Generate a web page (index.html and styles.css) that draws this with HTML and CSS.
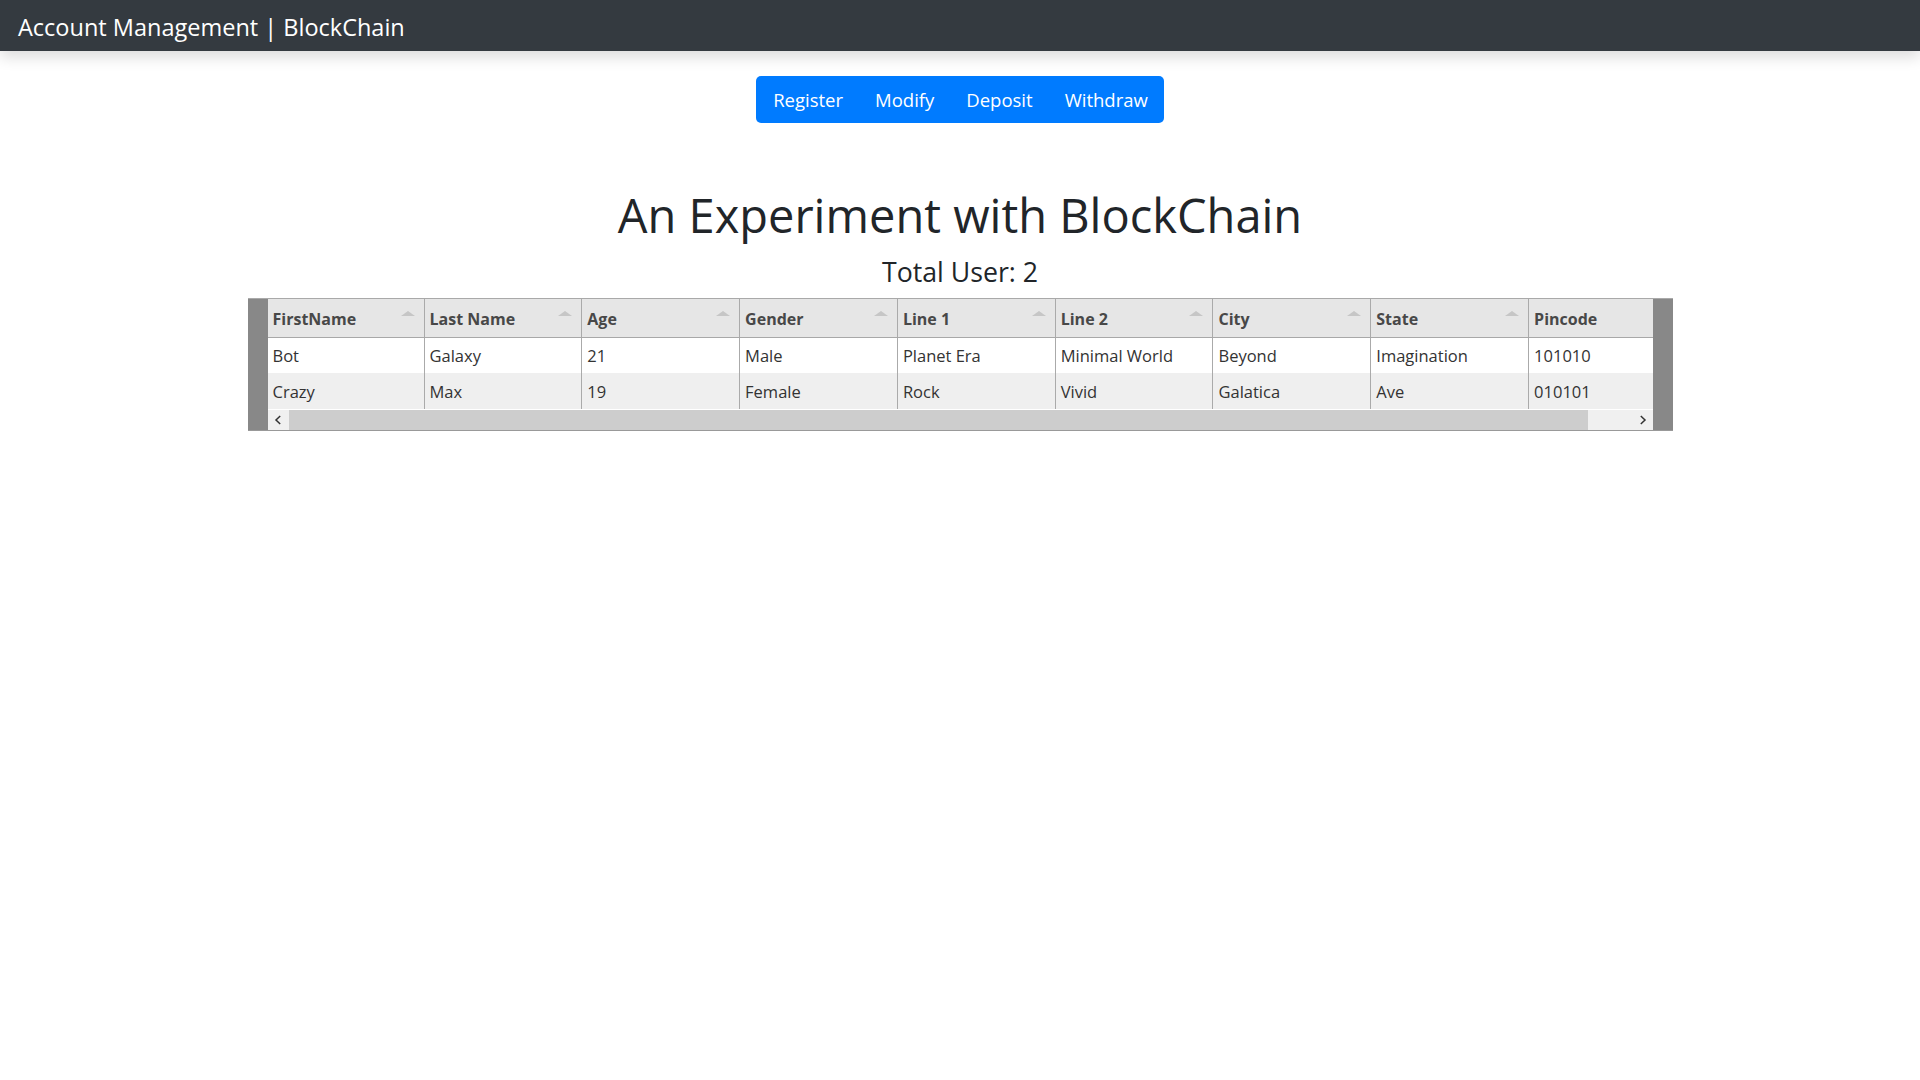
FILE: index.html
```html
<!DOCTYPE html>
<html lang="en">
<head>
<meta charset="utf-8">
<title>Account Management | BlockChain</title>
<link rel="stylesheet" href="styles.css">
</head>
<body>
<nav class="navbar"><span class="brand">Account Management | BlockChain</span></nav>
<main class="content">
  <div class="btn-group">
    <button class="btn">Register</button>
    <button class="btn">Modify</button>
    <button class="btn">Deposit</button>
    <button class="btn">Withdraw</button>
  </div>
  <h1 class="title">An Experiment with BlockChain</h1>
  <h3 class="subtitle">Total User: 2</h3>
  <div class="grid">
    <div class="grid-inner">
      <div class="viewport">
        <div class="row head">
          <div class="cell">FirstName<span class="sort"></span></div>
          <div class="cell">Last Name<span class="sort"></span></div>
          <div class="cell">Age<span class="sort"></span></div>
          <div class="cell">Gender<span class="sort"></span></div>
          <div class="cell">Line 1<span class="sort"></span></div>
          <div class="cell">Line 2<span class="sort"></span></div>
          <div class="cell">City<span class="sort"></span></div>
          <div class="cell">State<span class="sort"></span></div>
          <div class="cell">Pincode<span class="sort"></span></div>
        </div>
        <div class="row odd">
          <div class="cell">Bot</div>
          <div class="cell">Galaxy</div>
          <div class="cell">21</div>
          <div class="cell">Male</div>
          <div class="cell">Planet Era</div>
          <div class="cell">Minimal World</div>
          <div class="cell">Beyond</div>
          <div class="cell">Imagination</div>
          <div class="cell">101010</div>
        </div>
        <div class="row even">
          <div class="cell">Crazy</div>
          <div class="cell">Max</div>
          <div class="cell">19</div>
          <div class="cell">Female</div>
          <div class="cell">Rock</div>
          <div class="cell">Vivid</div>
          <div class="cell">Galatica</div>
          <div class="cell">Ave</div>
          <div class="cell">010101</div>
        </div>
      </div>
      <div class="hscroll">
        <span class="arrow"><svg width="8" height="10" viewBox="0 0 8 10"><path d="M6.2 1 L2 5 L6.2 9" fill="none" stroke="#333" stroke-width="1.5"/></svg></span>
        <div class="track"><div class="thumb"></div></div>
        <span class="arrow"><svg width="8" height="10" viewBox="0 0 8 10"><path d="M1.8 1 L6 5 L1.8 9" fill="none" stroke="#333" stroke-width="1.5"/></svg></span>
      </div>
    </div>
  </div>
</main>
</body>
</html>
```
FILE: styles.css
```css
html, body {
  margin: 0;
  padding: 0;
  background: #fff;
}
body {
  font-family: "Open Sans", "Noto Sans", "DejaVu Sans", sans-serif;
  color: #212529;
}
.navbar {
  height: 51px;
  box-sizing: border-box;
  background: #343a40;
  display: flex;
  align-items: flex-start;
  padding: 16px 0 0 18px;
  box-shadow: 0 6px 14px rgba(0, 0, 0, 0.14);
  position: relative;
  z-index: 1;
}
.brand {
  color: #fff;
  font-size: 23.5px;
  line-height: 23.5px;
}
.content {
  display: flex;
  flex-direction: column;
  align-items: center;
  padding-top: 25px;
}
.btn-group {
  display: flex;
  background: #007bff;
  border-radius: 5px;
  height: 47px;
}
.btn {
  background: transparent;
  border: 0;
  color: #fff;
  font-family: inherit;
  font-size: 18.5px;
  padding: 0 16px;
  height: 47px;
  cursor: pointer;
}
.btn:first-child { padding-left: 17px; }
.title {
  margin: 64px 0 0;
  font-size: 47px;
  font-weight: 400;
  line-height: 56px;
  color: #212529;
}
.subtitle {
  margin: 13px 0 0;
  font-size: 26.7px;
  font-weight: 400;
  line-height: 32px;
  color: #212529;
}
.grid {
  margin-top: 10px;
  width: 1425px;
  box-sizing: border-box;
  border-top: 1px solid #a9a9a9;
  border-bottom: 1px solid #999;
  background: #888;
  padding: 0 20px;
}
.grid-inner {
  background: #fff;
  overflow: hidden;
}
.viewport {
  overflow: hidden;
  width: 1385px;
}
.row {
  display: grid;
  grid-template-columns: 157px repeat(8, 157.8px);
  width: max-content;
}
.cell {
  position: relative;
  box-sizing: border-box;
  border-right: 1px solid #aaa;
  padding: 0 5px;
  font-size: 16.5px;
  white-space: nowrap;
  display: flex;
  align-items: center;
  color: #333;
}
.head {
  height: 38px;
  background: #e6e6e6;
  border-bottom: 1px solid #a8a8a8;
}
.head .cell {
  font-weight: 700;
  font-size: 16px;
  color: #484848;
  padding-top: 1px;
}
.odd { height: 35px; background: #fff; }
.even { height: 36px; background: #efefef; border-bottom: 1px solid #fff; }
.sort {
  position: absolute;
  right: 9px;
  top: 12px;
  width: 0;
  height: 0;
  border-left: 7px solid transparent;
  border-right: 7px solid transparent;
  border-bottom: 5px solid #c6c6c6;
}
.hscroll {
  display: flex;
  height: 20px;
  background: #f0f0f0;
  align-items: center;
}
.arrow {
  width: 20px;
  height: 20px;
  flex: none;
  display: flex;
  align-items: center;
  justify-content: center;
}
.arrow svg { display: block; }
.track {
  flex: 1;
  height: 20px;
  padding: 0 1px;
}
.thumb {
  width: 1299px;
  height: 20px;
  background: #cdcdcd;
}
```
